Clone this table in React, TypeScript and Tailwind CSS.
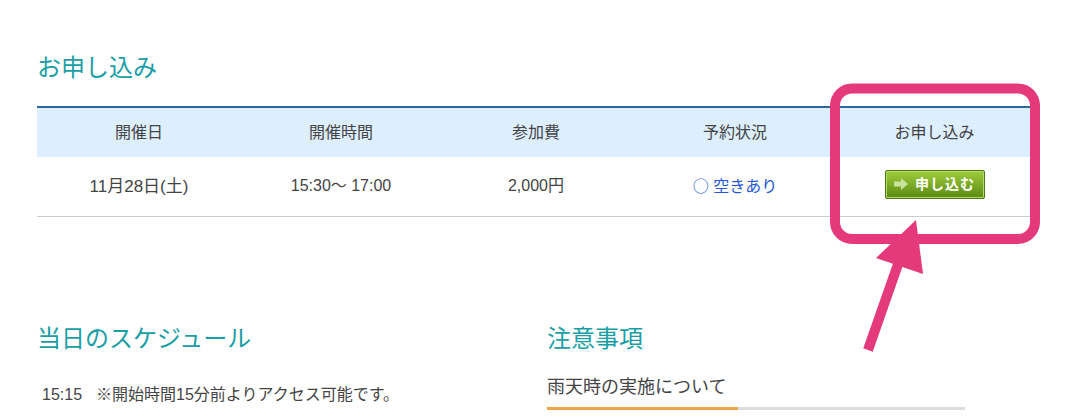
import React from "react";

const font = { fontFamily: '"Liberation Sans", "Noto Sans CJK JP", sans-serif' };

const cols = [
  { head: "開催日", w: "w-[204px]" },
  { head: "開催時間", w: "w-[200px]" },
  { head: "参加費", w: "w-[190px]" },
  { head: "予約状況", w: "w-[208px]" },
  { head: "お申し込み", w: "w-[191px]" },
];

function ApplyButton() {
  return (
    <button className="flex h-[29px] w-[100px] items-center justify-center gap-[7px] rounded-[2px] border border-[#4f7a12] bg-gradient-to-b from-[#a0cd3c] to-[#5a8a10] shadow-[inset_0_0_0_1px_#b4d86c]">
      <svg width="14" height="12" viewBox="0 0 14 12">
        <path d="M0 3.5h7V0l7 6-7 6V8.5H0z" fill="#c9e39b" />
      </svg>
      <span className="text-[14px] font-bold text-white tracking-[1px]">申し込む</span>
    </button>
  );
}

export default function App() {
  return (
    <div className="relative h-[420px] w-[1092px] overflow-hidden bg-white" style={font}>
      <div className="pl-[37px] pt-[53px]">
        <h2 className="text-[24px] leading-[30px] text-[#1a9ea6]">お申し込み</h2>

        {/* 日程テーブル */}
        <table className="mt-[23px] w-[993px] border-collapse border-t-2 border-[#2f6699] text-[16px] text-[#444]">
          <thead>
            <tr className="h-[50px] bg-[#ddeeff]">
              {cols.map((c) => (
                <th key={c.head} className={`${c.w} font-normal text-center`}>
                  {c.head}
                </th>
              ))}
            </tr>
          </thead>
          <tbody>
            <tr className="h-[59px] border-b border-[#cccccc] text-center">
              <td className="text-[17px]">11月28日(土)</td>
              <td>15:30～ 17:00</td>
              <td>2,000円</td>
              <td className="text-[#2557d6]">
                <span style={{ fontFamily: '"Noto Sans CJK JP", sans-serif' }}>○</span> 空きあり
              </td>
              <td>
                <div className="flex justify-center pb-[4px]">
                  <ApplyButton />
                </div>
              </td>
            </tr>
          </tbody>
        </table>

        <div className="mt-[107px] flex gap-[30px]">
          <div className="w-[480px]">
            <h2 className="text-[24px] leading-[30px] text-[#1a9ea6]">当日のスケジュール</h2>
            <div className="mt-[29px] flex pl-[5px] text-[16px] text-[#444]">
              <span className="w-[54px]">15:15</span>
              <span>※開始時間15分前よりアクセス可能です。</span>
            </div>
          </div>
          <div className="w-[418px]">
            <h2 className="text-[24px] leading-[30px] text-[#1a9ea6]">注意事項</h2>
            <div className="mt-[20px] text-[18px] leading-[26px] text-[#444]">雨天時の実施について</div>
            <div className="mt-[7px] flex h-[3px]">
              <div className="w-[191px] bg-[#f0a443]" />
              <div className="flex-1 bg-[#dddddd]" />
            </div>
          </div>
        </div>
      </div>

      {/* annotation */}
      <svg className="pointer-events-none absolute left-0 top-0" width="1092" height="420">
        <rect x="835" y="88.5" width="200" height="150.5" rx="17" fill="none" stroke="#e43a7b" strokeWidth="10" />
        <line x1="868" y1="350" x2="903" y2="250" stroke="#e43a7b" strokeWidth="10" />
        <polygon points="916,220 876,258 923,274" fill="#e43a7b" />
      </svg>
    </div>
  );
}
